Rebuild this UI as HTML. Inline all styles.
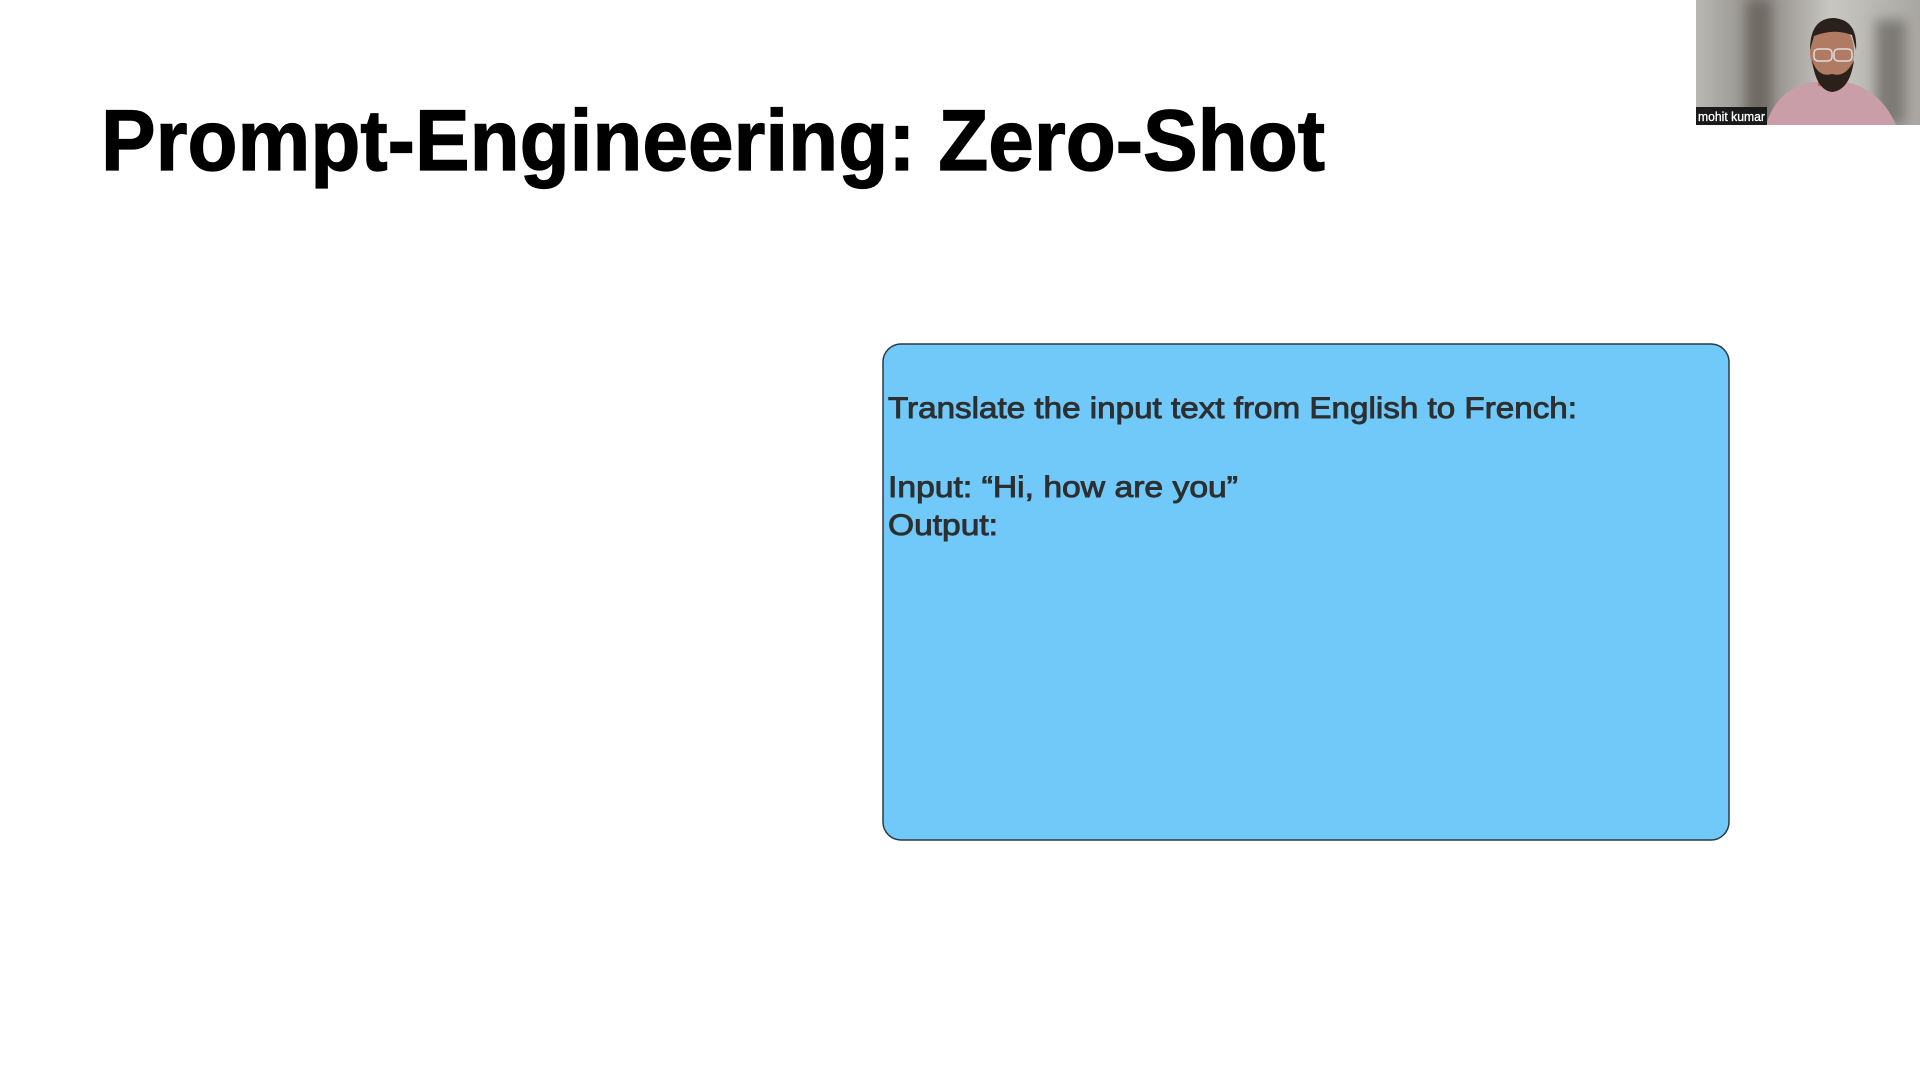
<!DOCTYPE html>
<html><head><meta charset="utf-8"><style>
html,body{margin:0;padding:0;background:#fff;width:1920px;height:1080px;overflow:hidden;font-family:"Liberation Sans",sans-serif}
svg{position:absolute;left:0;top:0}
</style></head><body>
<svg width="1920" height="1080" xmlns="http://www.w3.org/2000/svg">
<defs>
<filter id="b"><feGaussianBlur stdDeviation="6"/></filter>
<linearGradient id="bg" x1="0" x2="1"><stop offset="0" stop-color="#b9b8b3"/><stop offset="0.3" stop-color="#8d8a85"/><stop offset="0.6" stop-color="#c9c7c2"/><stop offset="1" stop-color="#a9a7a3"/></linearGradient>
</defs>
<text x="101" y="170" font-family="Liberation Sans" font-weight="bold" font-size="86" fill="#000" stroke="#000" stroke-width="1.2" textLength="1224" lengthAdjust="spacingAndGlyphs">Prompt-Engineering: Zero-Shot</text>
<rect x="883" y="344" width="846" height="496" rx="18" ry="18" fill="#70c9f8" stroke="#2a3a44" stroke-width="1.5"/>
<g font-family="Liberation Sans" font-size="30" fill="#2d2f31" stroke="#2d2f31" stroke-width="0.9">
<text x="888" y="418" textLength="689" lengthAdjust="spacingAndGlyphs">Translate the input text from English to French:</text>
<text x="888" y="497" textLength="350" lengthAdjust="spacingAndGlyphs">Input: “Hi, how are you”</text>
<text x="888" y="535" textLength="110" lengthAdjust="spacingAndGlyphs">Output:</text>
</g>
<svg x="1696" y="0" width="224" height="125">
<rect width="224" height="125" fill="url(#bg)"/>
<g filter="url(#b)">
<rect x="50" y="0" width="25" height="125" fill="#6f6a63"/>
<rect x="180" y="20" width="30" height="105" fill="#7d7a76"/>
</g>
<path d="M70 125 Q80 90 115 82 L150 82 Q185 90 200 125 Z" fill="#c99ea8"/>
<rect x="122" y="62" width="22" height="24" fill="#a87560"/>
<ellipse cx="136" cy="52" rx="22" ry="30" fill="#b07a63"/>
<path d="M114 50 Q114 18 138 18 Q162 20 160 50 L156 35 Q138 28 118 36 Z" fill="#2a211c"/>
<path d="M116 60 Q120 90 136 92 Q154 90 158 60 Q150 78 136 74 Q122 78 116 60 Z" fill="#2b201a"/>
<rect x="118" y="49" width="18" height="12" rx="4" fill="none" stroke="#ddd" stroke-width="1.5"/>
<rect x="138" y="49" width="18" height="12" rx="4" fill="none" stroke="#ddd" stroke-width="1.5"/>
<rect x="0" y="107" width="71" height="18" fill="#1a1a1a"/>
<text x="2" y="121" font-family="Liberation Sans" font-size="13" fill="#fff" stroke="#fff" stroke-width="0.3" textLength="67" lengthAdjust="spacingAndGlyphs">mohit kumar</text>
</svg>
</svg>
</body></html>
